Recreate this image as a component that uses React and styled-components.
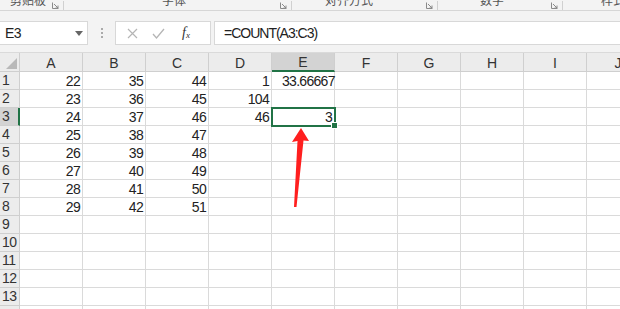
import React from "react";
import styled, { createGlobalStyle } from "styled-components";

const Global = createGlobalStyle`
  html, body { margin: 0; padding: 0; background: #ffffff; }
  body {
    width: 620px; height: 309px; overflow: hidden;
    font-family: "Liberation Sans", Arial, sans-serif;
  }
`;

const Page = styled.div`
  width: 620px;
  height: 309px;
  display: flex;
  flex-direction: column;
  background: #f3f3f3;
  overflow: hidden;
`;

const Ribbon = styled.div`
  height: 10px;
  display: flex;
  border-bottom: 1px solid #d6d6d6;
  overflow: hidden;
  flex-shrink: 0;
`;

const Group = styled.div`
  position: relative;
  width: ${(p) => p.$w}px;
  flex-shrink: 0;
  display: flex;
  align-items: flex-start;
  border-right: ${(p) => (p.$last ? "none" : "1px solid #d0d0d0")};
  height: 9px;
  margin-top: 1px;
`;

const GroupLabel = styled.span`
  position: absolute;
  left: ${(p) => p.$x}px;
  top: -8px;
  font-family: "Noto Sans CJK SC", sans-serif;
  font-size: 12px;
  line-height: 14px;
  color: #555;
  white-space: nowrap;
`;

const Launcher = styled.svg`
  position: absolute;
  right: 4px;
  top: 1px;
`;

const FormulaRow = styled.div`
  height: 41px;
  display: flex;
  align-items: flex-start;
  padding-top: 10px;
  box-sizing: border-box;
  flex-shrink: 0;
`;

const NameBox = styled.div`
  width: 88px;
  height: 24px;
  background: #fff;
  border: 1px solid #d8d8d8;
  border-left: none;
  box-sizing: border-box;
  display: flex;
  align-items: center;
  justify-content: space-between;
  padding: 0 4px 0 5px;
  font-size: 14px;
  letter-spacing: -0.6px;
  color: #222;
`;

const Caret = styled.span`
  width: 0;
  height: 0;
  border-left: 4px solid transparent;
  border-right: 4px solid transparent;
  border-top: 5px solid #666;
`;

const Dots = styled.div`
  width: 27px;
  height: 24px;
  display: flex;
  flex-direction: column;
  align-items: center;
  justify-content: center;
  gap: 2px;
  span {
    width: 2px;
    height: 2px;
    background: #aaa;
  }
`;

const FxBox = styled.div`
  width: 96px;
  height: 24px;
  background: #fff;
  border: 1px solid #d8d8d8;
  box-sizing: border-box;
  display: flex;
  align-items: center;
  padding-left: 11px;
  gap: 14px;
  color: #b0b0b0;
`;

const Fx = styled.span`
  font-family: "Liberation Serif", "Times New Roman", serif;
  font-style: italic;
  font-size: 14px;
  color: #333;
  margin-left: 3px;
  sub {
    font-size: 9px;
    vertical-align: -1px;
  }
`;

const FormulaInput = styled.div`
  flex: 1;
  margin-left: 3px;
  height: 24px;
  background: #fff;
  border: 1px solid #d8d8d8;
  border-right: none;
  box-sizing: border-box;
  display: flex;
  align-items: center;
  padding-left: 9px;
  font-size: 14px;
  letter-spacing: -1px;
  color: #222;
`;

const SheetWrap = styled.div`
  position: relative;
  flex: 1;
  background: #fff;
  border-top: 1px solid #dadada;
`;

const Grid = styled.div`
  display: grid;
  grid-template-columns: 20px repeat(10, 63px);
  grid-template-rows: 19px repeat(14, 18px);
`;

const Corner = styled.div`
  background: #ececec;
  border-right: 1px solid #cfcfcf;
  border-bottom: 1px solid #cfcfcf;
  position: relative;
  &::after {
    content: "";
    position: absolute;
    right: 2px;
    bottom: 2px;
    width: 0;
    height: 0;
    border-left: 11px solid transparent;
    border-bottom: 11px solid #b9b9b9;
  }
`;

const ColHead = styled.div`
  background: ${(p) => (p.$sel ? "#d3d3d3" : "#ececec")};
  border-right: 1px solid #cfcfcf;
  border-bottom: ${(p) => (p.$sel ? "2px solid #217346" : "1px solid #cfcfcf")};
  display: flex;
  align-items: center;
  justify-content: center;
  font-size: 14px;
  color: #333;
  padding-top: 1px;
  box-sizing: border-box;
`;

const RowHead = styled.div`
  background: ${(p) => (p.$sel ? "#d3d3d3" : "#ececec")};
  border-right: ${(p) => (p.$sel ? "2px solid #217346" : "1px solid #cfcfcf")};
  border-bottom: 1px solid #cfcfcf;
  display: flex;
  align-items: flex-end;
  padding: 0 0 1px 2px;
  box-sizing: border-box;
  font-size: 14px;
  letter-spacing: -0.6px;
  color: #333;
`;

const Cell = styled.div`
  position: relative;
  border-right: 1px solid #dadada;
  border-bottom: 1px solid #dadada;
  display: flex;
  align-items: flex-end;
  justify-content: ${(p) => (p.$left ? "flex-start" : "flex-end")};
  padding: 0 ${(p) => (p.$left ? "0" : "2px")} 0 ${(p) => (p.$left ? "10px" : "0")};
  box-sizing: border-box;
  font-size: 14px;
  letter-spacing: -0.7px;
  line-height: 16px;
  color: #222;
  white-space: nowrap;
  ${(p) =>
    p.$sel &&
    `
    outline: 2px solid #217346;
    outline-offset: -1px;
    z-index: 2;
  `}
`;

const Handle = styled.span`
  position: absolute;
  right: -4px;
  bottom: -4px;
  width: 5px;
  height: 5px;
  background: #217346;
  border: 1px solid #fff;
`;

const ArrowSvg = styled.svg`
  position: absolute;
  left: 0;
  top: -1px;
  pointer-events: none;
  z-index: 3;
`;

const groups = [
  { w: 63, label: "剪贴板", x: 10 },
  { w: 227, label: "字体", x: 98 },
  { w: 145, label: "对齐方式", x: 33 },
  { w: 124, label: "数字", x: 42 },
  { w: 61, label: "样式", x: 38, last: true },
];

const cols = ["A", "B", "C", "D", "E", "F", "G", "H", "I", "J"];

const data = {
  1: ["22", "35", "44", "1", "33.66667"],
  2: ["23", "36", "45", "104", ""],
  3: ["24", "37", "46", "46", "3"],
  4: ["25", "38", "47"],
  5: ["26", "39", "48"],
  6: ["27", "40", "49"],
  7: ["28", "41", "50"],
  8: ["29", "42", "51"],
};

const LauncherIcon = () => (
  <Launcher width="7" height="7" viewBox="0 0 7 7">
    <path d="M0.5 0.5 V6.5 H6.5" fill="none" stroke="#8a8a8a" strokeWidth="1" />
    <path d="M2 2 L6 6 M6 3.5 V6 H3.5" fill="none" stroke="#8a8a8a" strokeWidth="1" />
  </Launcher>
);

export default function App() {
  const rows = Array.from({ length: 14 }, (_, i) => i + 1);
  return (
    <>
      <Global />
      <Page>
        <Ribbon>
          {groups.map((g) => (
            <Group key={g.label} $w={g.w} $last={g.last}>
              <GroupLabel $x={g.x}>{g.label}</GroupLabel>
              {!g.last && <LauncherIcon />}
            </Group>
          ))}
        </Ribbon>
        <FormulaRow>
          <NameBox>
            E3
            <Caret />
          </NameBox>
          <Dots>
            <span />
            <span />
            <span />
          </Dots>
          <FxBox>
            <svg width="11" height="11" viewBox="0 0 11 11">
              <path d="M1 1 L10 10 M10 1 L1 10" stroke="#b5b5b5" strokeWidth="1.2" />
            </svg>
            <svg width="13" height="11" viewBox="0 0 13 11">
              <path d="M1 6 L4.5 10 L12 1" fill="none" stroke="#b5b5b5" strokeWidth="1.3" />
            </svg>
            <Fx>
              f<sub>x</sub>
            </Fx>
          </FxBox>
          <FormulaInput>=COUNT(A3:C3)</FormulaInput>
        </FormulaRow>
        <SheetWrap>
          <Grid>
            <Corner />
            {cols.map((c) => (
              <ColHead key={c} $sel={c === "E"}>
                {c}
              </ColHead>
            ))}
            {rows.map((r) => (
              <React.Fragment key={r}>
                <RowHead $sel={r === 3}>{r}</RowHead>
                {cols.map((c, ci) => {
                  const v = (data[r] && data[r][ci]) || "";
                  const sel = r === 3 && c === "E";
                  return (
                    <Cell key={c} $sel={sel} $left={r === 1 && c === "E"}>
                      {v}
                      {sel && <Handle />}
                    </Cell>
                  );
                })}
              </React.Fragment>
            ))}
          </Grid>
          <ArrowSvg width="620" height="258" viewBox="0 52 620 258">
            <polygon
              points="301,128 309,141 303.5,140.5 296.5,207 294,207 297.5,141 292,142"
              fill="#ff1f1f"
            />
          </ArrowSvg>
        </SheetWrap>
      </Page>
    </>
  );
}
